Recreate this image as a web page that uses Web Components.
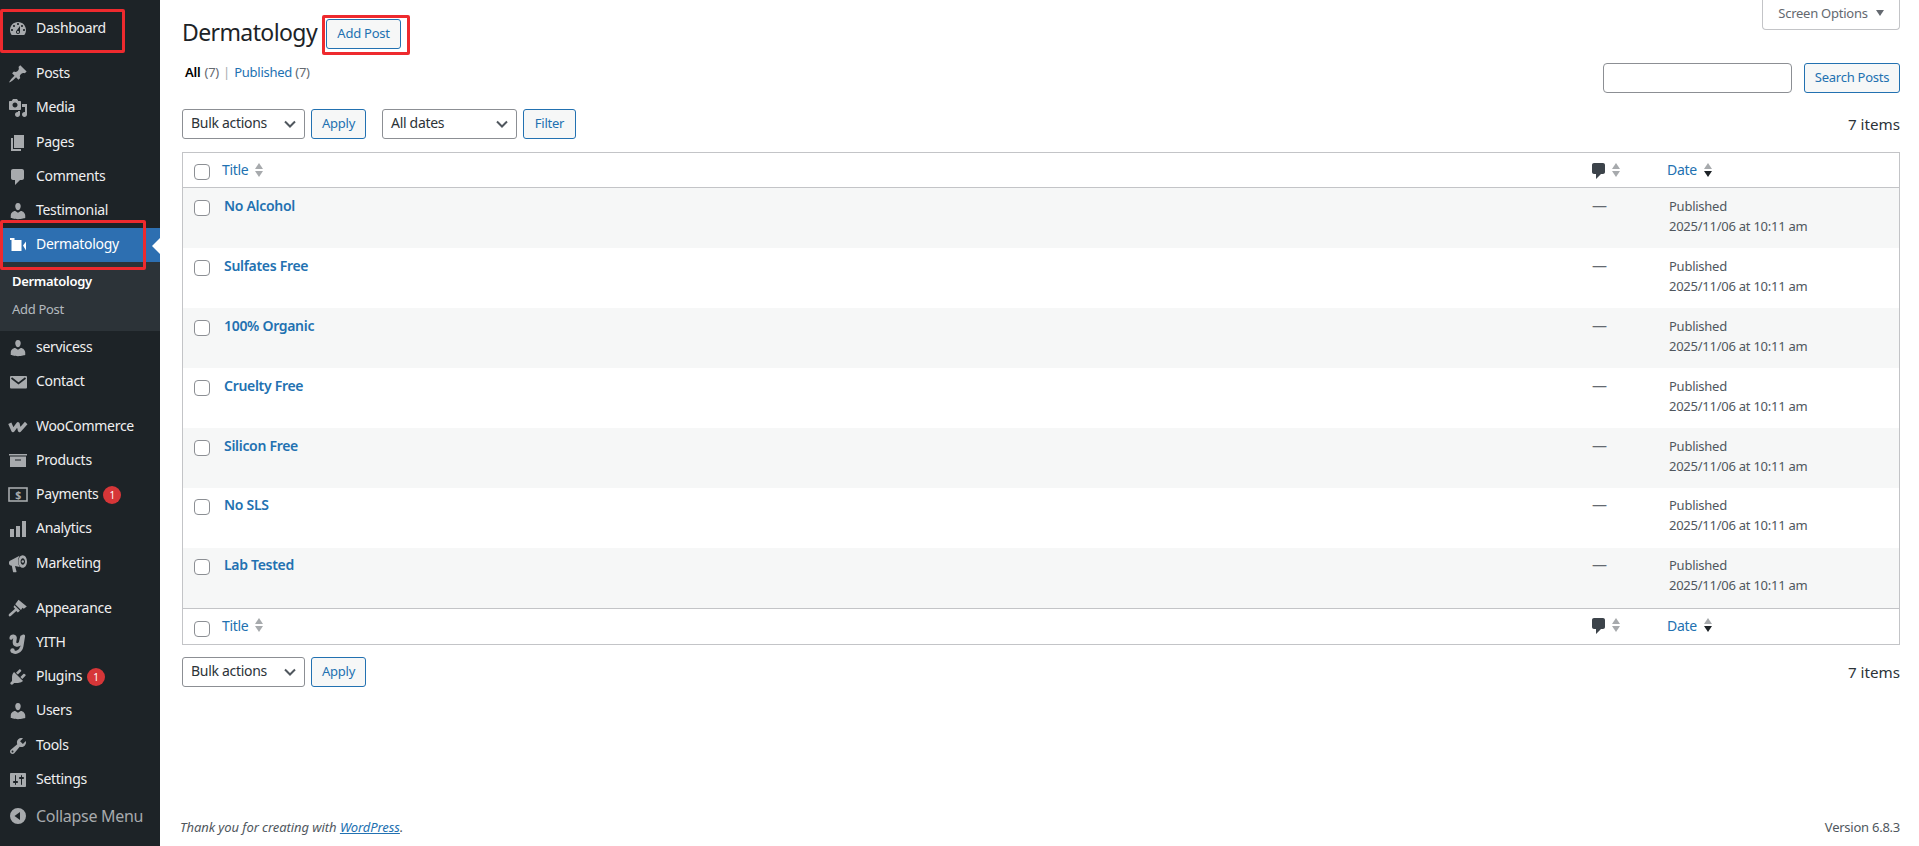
<!DOCTYPE html>
<html lang="en"><head><meta charset="utf-8"><title>Dermatology</title>
<style>
html,body{margin:0;height:100%;background:#fff;overflow:hidden}
body{font:13px/1.4 "Noto Sans",sans-serif;color:#3c434a;letter-spacing:-.25px}
</style></head><body>
<wp-app>
  <admin-menu slot="side">
    <menu-item icon="dashboard">Dashboard</menu-item>
    <menu-sep style="height:11px"></menu-sep>
    <menu-item icon="pin">Posts</menu-item>
    <menu-item icon="media">Media</menu-item>
    <menu-item icon="page">Pages</menu-item>
    <menu-item icon="comments">Comments</menu-item>
    <menu-item icon="user">Testimonial</menu-item>
    <menu-item icon="video" current>Dermatology</menu-item>
    <sub-menu>
      <sub-item current>Dermatology</sub-item>
      <sub-item>Add Post</sub-item>
    </sub-menu>
    <menu-item icon="user">servicess</menu-item>
    <menu-item icon="mail">Contact</menu-item>
    <menu-sep style="height:10.6px"></menu-sep>
    <menu-item icon="woo">WooCommerce</menu-item>
    <menu-item icon="archive">Products</menu-item>
    <menu-item icon="pay" badge="1">Payments</menu-item>
    <menu-item icon="bars">Analytics</menu-item>
    <menu-item icon="mega">Marketing</menu-item>
    <menu-sep style="height:11px"></menu-sep>
    <menu-item icon="brush">Appearance</menu-item>
    <menu-item icon="yith">YITH</menu-item>
    <menu-item icon="plug" badge="1">Plugins</menu-item>
    <menu-item icon="user">Users</menu-item>
    <menu-item icon="tools">Tools</menu-item>
    <menu-item icon="settings">Settings</menu-item>
    <menu-item icon="collapse" muted>Collapse Menu</menu-item>
  </admin-menu>
  <post-list>
    <post-row>No Alcohol</post-row>
    <post-row>Sulfates Free</post-row>
    <post-row>100% Organic</post-row>
    <post-row>Cruelty Free</post-row>
    <post-row>Silicon Free</post-row>
    <post-row>No SLS</post-row>
    <post-row>Lab Tested</post-row>
  </post-list>
  <red-box style="left:0;top:9px;width:125px;height:44px"></red-box>
  <red-box style="left:0;top:220px;width:146px;height:50px"></red-box>
  <red-box style="left:322px;top:15px;width:88px;height:40px"></red-box>
</wp-app>
<script>
const ICONS={
dashboard:'<path d="M3.76 16h12.48c1.100-1.370 1.760-3.110 1.760-5 0-4.420-3.580-8-8-8s-8 3.580-8 8c0 1.890.660 3.630 1.760 5zM10 4c.550 0 1 .450 1 1s-.450 1-1 1-1-.450-1-1 .450-1 1-1zM6 6c.550 0 1 .450 1 1s-.450 1-1 1-1-.450-1-1 .450-1 1-1zm8 0c.550 0 1 .450 1 1s-.450 1-1 1-1-.450-1-1 .450-1 1-1zm-5.370 5.550L12 7v6c0 1.100-.900 2-2 2s-2-.900-2-2c0-.570.240-1.080.630-1.450zM4 10c.550 0 1 .450 1 1s-.450 1-1 1-1-.450-1-1 .450-1 1-1zm12 0c.550 0 1 .450 1 1s-.450 1-1 1-1-.450-1-1 .450-1 1-1zm-5 3c0-.550-.450-1-1-1s-1 .450-1 1 .450 1 1 1 1-.450 1-1z"/>',
pin:'<path d="M10.440 3.020l1.820-1.820 6.360 6.350-1.830 1.820c-1.050-.680-2.480-.570-3.410.360l-.750.750c-.920.930-1.040 2.350-.350 3.410l-1.830 1.820-2.410-2.410-2.800 2.790c-.420.420-3.380 2.710-3.800 2.290s1.860-3.390 2.280-3.810l2.790-2.790L4.100 9.360l1.830-1.820c1.050.690 2.480.570 3.400-.360l.750-.750c.930-.920 1.050-2.350.360-3.410z"/>',
media:'<path d="M13 11V4c0-.550-.450-1-1-1h-1.670L9 1H5L3.670 3H2c-.550 0-1 .450-1 1v7c0 .550.450 1 1 1h10c.550 0 1-.450 1-1zM7 4.500c1.380 0 2.500 1.120 2.500 2.500S8.380 9.500 7 9.500 4.500 8.380 4.500 7 5.620 4.500 7 4.500zM14 6h5v10.500c0 1.380-1.120 2.500-2.500 2.500S14 17.880 14 16.500s1.120-2.500 2.500-2.500c.170 0 .340.020.500.050V9h-3V6zm-4 8.050V13h2v3.500c0 1.380-1.120 2.500-2.500 2.500S7 17.880 7 16.500 8.120 14 9.500 14c.170 0 .340.020.500.050z"/>',
page:'<path d="M6 15V2h10v13H6zm-1 1h8v2H3V5h2v11z"/>',
comments:'<path d="M5 2h9c1.100 0 2 .900 2 2v7c0 1.100-.900 2-2 2h-2l-5 5v-5H5c-1.100 0-2-.900-2-2V4c0-1.100.900-2 2-2z"/>',
user:'<path d="M10 9.250c-2.270 0-2.730-3.440-2.730-3.440C7 4.020 7.820 2 9.970 2c2.160 0 2.980 2.020 2.710 3.810 0 0-.410 3.440-2.680 3.440zm0 2.570L12.720 10c2.390 0 4.520 2.330 4.520 4.530v2.490s-3.650 1.130-7.240 1.130c-3.650 0-7.240-1.130-7.240-1.130v-2.490c0-2.250 1.940-4.480 4.470-4.480z"/>',
video:'<path d="M2 3h4.500v2H13.500v11H3.500V5H2zM15 10.500l3-4v9z"/>',
mail:'<rect x="2" y="4" width="17" height="12.500" rx="1"/><path d="M3.500 6l7 5.500 7-5.500" fill="none" stroke="#1d2327" stroke-width="1.700"/>',
woo:'<path d="M1.800 6.200L5 13.500 10 6.800l1.500 6.700L18.200 6" fill="none" stroke="currentColor" stroke-width="3.400" stroke-linejoin="round"/>',
archive:'<path d="M1 3h18v1.500H1z"/><path fill-rule="evenodd" d="M2 5.500h16V16H2zm5 3v1h6v-1z"/>',
pay:'<rect x="1" y="3" width="18" height="13" fill="none" stroke="currentColor" stroke-width="1.600"/><text x="10" y="13.500" text-anchor="middle" font-size="10.500" font-weight="700" font-family="Noto Sans" fill="currentColor">$</text>',
bars:'<path d="M18 18V2h-4v16h4zm-6 0V7H8v11h4zm-6 0v-8H2v8h4z"/>',
mega:'<path d="M1 8.500C1 7.500 1.700 6.800 2.500 6.500L11.500 1.800C9.500 5.500 9.500 9.500 11.800 13L7 12l1.500 5.500c.1.500-.3.800-.7.800H5.800c-.4 0-.7-.200-.8-.600L3.800 11.800C2 11.600 1 10.500 1 9.500z"/><path fill-rule="evenodd" d="M14.700 1.200c2.400 0 4.300 2.800 4.300 6.300s-1.900 6.300-4.300 6.300-4.300-2.800-4.300-6.300 1.900-6.300 4.300-6.300zm.1 3c-1.200 0-2.200 1.500-2.200 3.300s1 3.300 2.200 3.300 2.200-1.500 2.200-3.300-1-3.300-2.200-3.300z"/><circle cx="14.800" cy="7.500" r="1.200"/>',
brush:'<path d="M10.500 .8L18.800 7.500 15.800 9.800 14.500 8.800 13 11 7.200 5.300z"/><path d="M6.500 6.200L12 11.800 9.800 13.500 8.300 12 2.800 17c-.8.600-1.500.500-1.900-.100-.4-.700-.2-1.400.500-2.100L7 9.700 5.500 8.100z"/>',
yith:'<path fill="none" stroke="currentColor" stroke-width="3.600" stroke-linecap="round" d="M3.200 5C3.700 2.500 7.500 2.500 7 5.500L6.500 8.500C6 12.500 10.500 13 12.500 10L14 4"/><path fill="none" stroke="currentColor" stroke-width="3.200" stroke-linecap="round" d="M15.500 3L13.800 13.500C12.800 18.500 7.500 20.500 4.500 18.500"/><circle cx="4.500" cy="17.500" r="2.200"/>',
plug:'<path d="M13.110 4.360L9.870 7.600 8 5.730l3.240-3.240c.350-.340 1.050-.200 1.560.320.520.510.660 1.210.310 1.550zm-8 1.770l.910-1.120 9.010 9.010-1.190.840c-.710.710-2.630 1.160-3.820 1.160H6.140L4.900 17.260c-.590.590-1.540.590-2.120 0-.590-.580-.590-1.530 0-2.120l1.240-1.240v-3.880c0-1.130.400-3.190 1.090-3.890zm7.260 3.970l3.240-3.240c.340-.350 1.040-.210 1.550.310.520.510.660 1.210.310 1.550l-3.240 3.250z"/>',
tools:'<path d="M16.680 9.770c-1.340 1.340-3.300 1.670-4.950.990l-5.410 6.520c-.990.990-2.590.990-3.570 0-.990-.980-.990-2.580 0-3.570l6.520-5.420c-.680-1.650-.350-3.610.990-4.950 1.280-1.280 3.120-1.620 4.720-1.060l-2.890 2.890 2.820 2.820 2.860-2.870c.530 1.580.180 3.400-1.090 4.650zM3.810 16.210c.400.390 1.030.390 1.420 0 .400-.400.400-1.030 0-1.430-.390-.390-1.020-.390-1.420 0-.390.400-.390 1.030 0 1.430z"/>',
settings:'<path d="M18 16V4c0-.550-.450-1-1-1H3c-.550 0-1 .450-1 1v12c0 .550.450 1 1 1h14c.550 0 1-.450 1-1zM8 11h1c.550 0 1 .450 1 1s-.450 1-1 1H8v1.500c0 .280-.220.500-.500.500s-.500-.220-.500-.500V13H6c-.550 0-1-.450-1-1s.450-1 1-1h1V5.500c0-.280.220-.500.500-.500s.500.220.500.500V11zm5-2h-1c-.550 0-1-.450-1-1s.450-1 1-1h1V5.500c0-.280.220-.500.500-.500s.500.220.500.500V7h1c.550 0 1 .450 1 1s-.450 1-1 1h-1v5.500c0 .280-.220.500-.500.500s-.500-.220-.500-.500V9z"/>',
collapse:'<path fill-rule="evenodd" d="M10 2a8 8 0 1 0 0 16 8 8 0 0 0 0-16zm2 4v8l-5.500-4z"/>'
};
const FONT='"Noto Sans",sans-serif';
function el(name,css,html){
  customElements.define(name,class extends HTMLElement{
    connectedCallback(){
      if(this.shadowRoot)return;
      const r=this.attachShadow({mode:'open'});
      r.innerHTML='<style>'+css+'</style>'+(typeof html==='function'?html(this):html);
    }
  });
}
el('wp-app',`:host{display:grid;grid-template-columns:160px 1fr;height:846px;position:relative}
  ::slotted(admin-menu){grid-column:1}::slotted(post-list){grid-column:2}`,'<slot name="side"></slot><slot></slot>');
el('admin-menu',`:host{display:flex;flex-direction:column;background:#1d2327;padding-top:12px;height:834px}`,'<slot></slot>');
el('menu-sep',`:host{display:block;flex:none}`,'');
el('menu-item',`:host{display:flex;flex:none;height:34.2px;color:#f0f0f1;font:14px/18px ${FONT};letter-spacing:-.3px;position:relative;box-sizing:border-box;align-items:flex-start}
  :host([current]){background:#2d6fb1;color:#fff}
  :host([muted]){color:#a7aaad;font-size:16px;margin-top:2px}
  :host([muted]) span.l{padding-top:8px}
  svg{width:20px;height:20px;margin:7px 8px 0;fill:#a7aaad;color:#a7aaad;flex:none;overflow:visible}
  :host([current]) svg{fill:#fff;color:#fff}
  .l{padding-top:7px;white-space:nowrap}
  .b{width:18px;height:18px;border-radius:9px;background:#d63638;color:#fff;font-size:10px;line-height:18px;text-align:center;margin:8px 0 0 5px;letter-spacing:0}
  .a{position:absolute;right:0;top:10px;border:8px solid transparent;border-right-color:#fff;border-left:0}`,
  h=>`<svg viewBox="0 0 20 20">${ICONS[h.getAttribute('icon')]}</svg><span class="l"><slot></slot></span>`+
  (h.hasAttribute('badge')?`<span class="b">${h.getAttribute('badge')}</span>`:'')+(h.hasAttribute('current')?'<i class="a"></i>':''));
el('sub-menu',`:host{display:block;flex:none;box-sizing:border-box;height:68.6px;background:#2c3338;padding:7px 0 0}`,'<slot></slot>');
el('sub-item',`:host{display:block;height:27px;padding:0 0 0 12px;font:13px/27px ${FONT};letter-spacing:-.3px;color:rgba(240,246,252,.7)}
  :host([current]){color:#fff;font-weight:600;line-height:25px}`,'<slot></slot>');
el('red-box',`:host{position:absolute;box-sizing:border-box;border:3px solid #ee2a2e;border-radius:2px;pointer-events:none}`,'');
el('wp-btn',`:host{display:inline-flex;box-sizing:border-box;height:30px;padding-bottom:2px;align-items:center;justify-content:center;border:1px solid #2271b1;border-radius:3px;background:#f6f7f7;color:#2271b1;font:13px ${FONT};letter-spacing:-.25px}`,'<slot></slot>');
el('wp-select',`:host{display:flex;box-sizing:border-box;height:30px;padding-bottom:3px;align-items:center;border:1px solid #8c8f94;border-radius:3px;background:#fff;color:#2c3338;font:14px ${FONT};letter-spacing:-.3px;padding-left:8px;position:relative}
  svg{position:absolute;right:8px;top:8px;width:12px;height:12px;fill:none;stroke:#50575e;stroke-width:2}`,
  '<slot></slot><svg viewBox="0 0 12 12"><path d="M1 3.500l5 5 5-5"/></svg>');
el('sort-arrows',`:host{display:inline-block;width:8px;height:16px;vertical-align:middle}
  svg{display:block;width:8px;height:16px}.u{fill:#a7aaad}.d{fill:#a7aaad}
  :host([active]) .d{fill:#1d2327}`,'<svg viewBox="0 0 8 16"><path class="u" d="M4 1l4 6H0z"/><path class="d" d="M4 15L0 9h8z"/></svg>');
el('table-nav',`:host{display:flex;height:30px;align-items:center;font:13px ${FONT}}
  .c{font:15.2px ${FONT};letter-spacing:0;color:#2c3338;margin-left:auto;margin-top:-1px}`,
  `<slot></slot><span class="c">7 items</span>`);
el('table-head',`:host{display:grid;grid-template-columns:39px 1fr 76px 232px;box-sizing:border-box;background:#fff;font:14px ${FONT};letter-spacing:-.3px;align-items:center;height:36px}
  :host(.first){height:35px;border-bottom:1px solid #c3c4c7}
  :host(.last){border-top:1px solid #c3c4c7}
  .cb{width:16px;height:16px;box-sizing:border-box;border:1px solid #8c8f94;border-radius:4px;margin:4px 0 0 11px;background:#fff}
  a{color:#2271b1}sort-arrows{margin-left:7px}
  svg.cm{width:20px;height:20px;fill:#3c434a;margin-left:-2px;margin-top:2px}
  svg.cm + sort-arrows{margin-left:3px}
  .r{display:flex;align-items:center;margin-top:-1px}
  :host(.last) .r{margin-top:-3px}`,
  `<div class="cb"></div><div class="r"><a>Title</a><sort-arrows></sort-arrows></div><div class="r"><svg class="cm" viewBox="0 0 20 20">${ICONS.comments}</svg><sort-arrows></sort-arrows></div><div class="r"><a>Date</a><sort-arrows active></sort-arrows></div>`);
el('post-row',`:host{display:grid;grid-template-columns:41px 1fr 74px 230px;height:60px;box-sizing:border-box;padding-top:8px;align-items:start;font:13px ${FONT};letter-spacing:-.25px;color:#50575e}
  :host(:nth-child(odd)){background:#f6f7f7}
  :host(:nth-child(n+6)){padding-top:7px}
  .cb{width:16px;height:16px;box-sizing:border-box;border:1px solid #8c8f94;border-radius:4px;margin:4px 0 0 11px;background:#fff}
  b{color:#2271b1;font:600 14px/20px ${FONT};letter-spacing:-.3px}
  .c{color:#646970;line-height:18px;font-size:15px;margin-left:-3px}.d{line-height:20px}`,
  `<div class="cb"></div><b><slot></slot></b><div class="c">—</div><div class="d">Published<br>2025/11/06 at 10:11 am</div>`);
el('post-list',`:host{display:flex;flex-direction:column;height:846px;box-sizing:border-box;padding:0 19px 0 22px;font:13px ${FONT};letter-spacing:-.25px;color:#3c434a}
  .top{display:flex;height:63px;align-items:flex-start}
  h1{margin:17px 0 0;font:400 23px/31px ${FONT};letter-spacing:-.6px;color:#1d2327}
  wp-btn.add{margin:19px 0 0 9px;width:75px}
  .so{margin-left:auto;box-sizing:border-box;width:138px;height:30px;padding-bottom:3px;border:1px solid #c3c4c7;border-top:0;border-radius:0 0 4px 4px;display:flex;align-items:center;justify-content:center;color:#646970;gap:8px}
  .so i{border:4px solid transparent;border-top:6px solid #646970;border-bottom:0}
  .row{display:flex;height:30px}
  .subs{padding-left:3px;line-height:18px;color:#646970}
  .subs b{color:#000;font-weight:600;margin-right:1px}.subs a{color:#2271b1}.subs span{color:#a7aaad;margin:0 1px}
  .search{margin-left:auto;display:flex;gap:12px}
  .inp{width:189px;height:30px;box-sizing:border-box;border:1px solid #8c8f94;border-radius:4px;background:#fff}
  table-nav.t1{margin-top:16px}
  table-nav.t2{margin-top:12px}
  .tbl{margin-top:13px;border:1px solid #c3c4c7;background:#fff}
  footer{margin-top:auto;display:flex;justify-content:space-between;height:40px;box-sizing:border-box;padding-top:12px;font-size:13px;color:#50575e}
  footer em{margin-left:-2px;letter-spacing:-.07px}footer a{color:#2271b1;text-decoration:underline}`,
  `<div class="top"><h1>Dermatology</h1><wp-btn class="add">Add Post</wp-btn><div class="so">Screen Options <i></i></div></div>
  <div class="row"><div class="subs"><b>All</b> (7) <span>|</span> <a>Published</a> (7)</div><div class="search"><div class="inp"></div><wp-btn style="width:96px">Search Posts</wp-btn></div></div>
  <table-nav class="t1"><wp-select style="width:123px">Bulk actions</wp-select><wp-btn style="width:55px;margin-left:6px">Apply</wp-btn><wp-select style="width:135px;margin-left:16px">All dates</wp-select><wp-btn style="width:53px;margin-left:6px">Filter</wp-btn></table-nav>
  <div class="tbl"><table-head class="first"></table-head><div class="rows"><slot></slot></div><table-head class="last"></table-head></div>
  <table-nav class="t2"><wp-select style="width:123px">Bulk actions</wp-select><wp-btn style="width:55px;margin-left:6px">Apply</wp-btn></table-nav>
  <footer><em>Thank you for creating with <a>WordPress</a>.</em><span>Version 6.8.3</span></footer>`);
</script>
</body></html>
